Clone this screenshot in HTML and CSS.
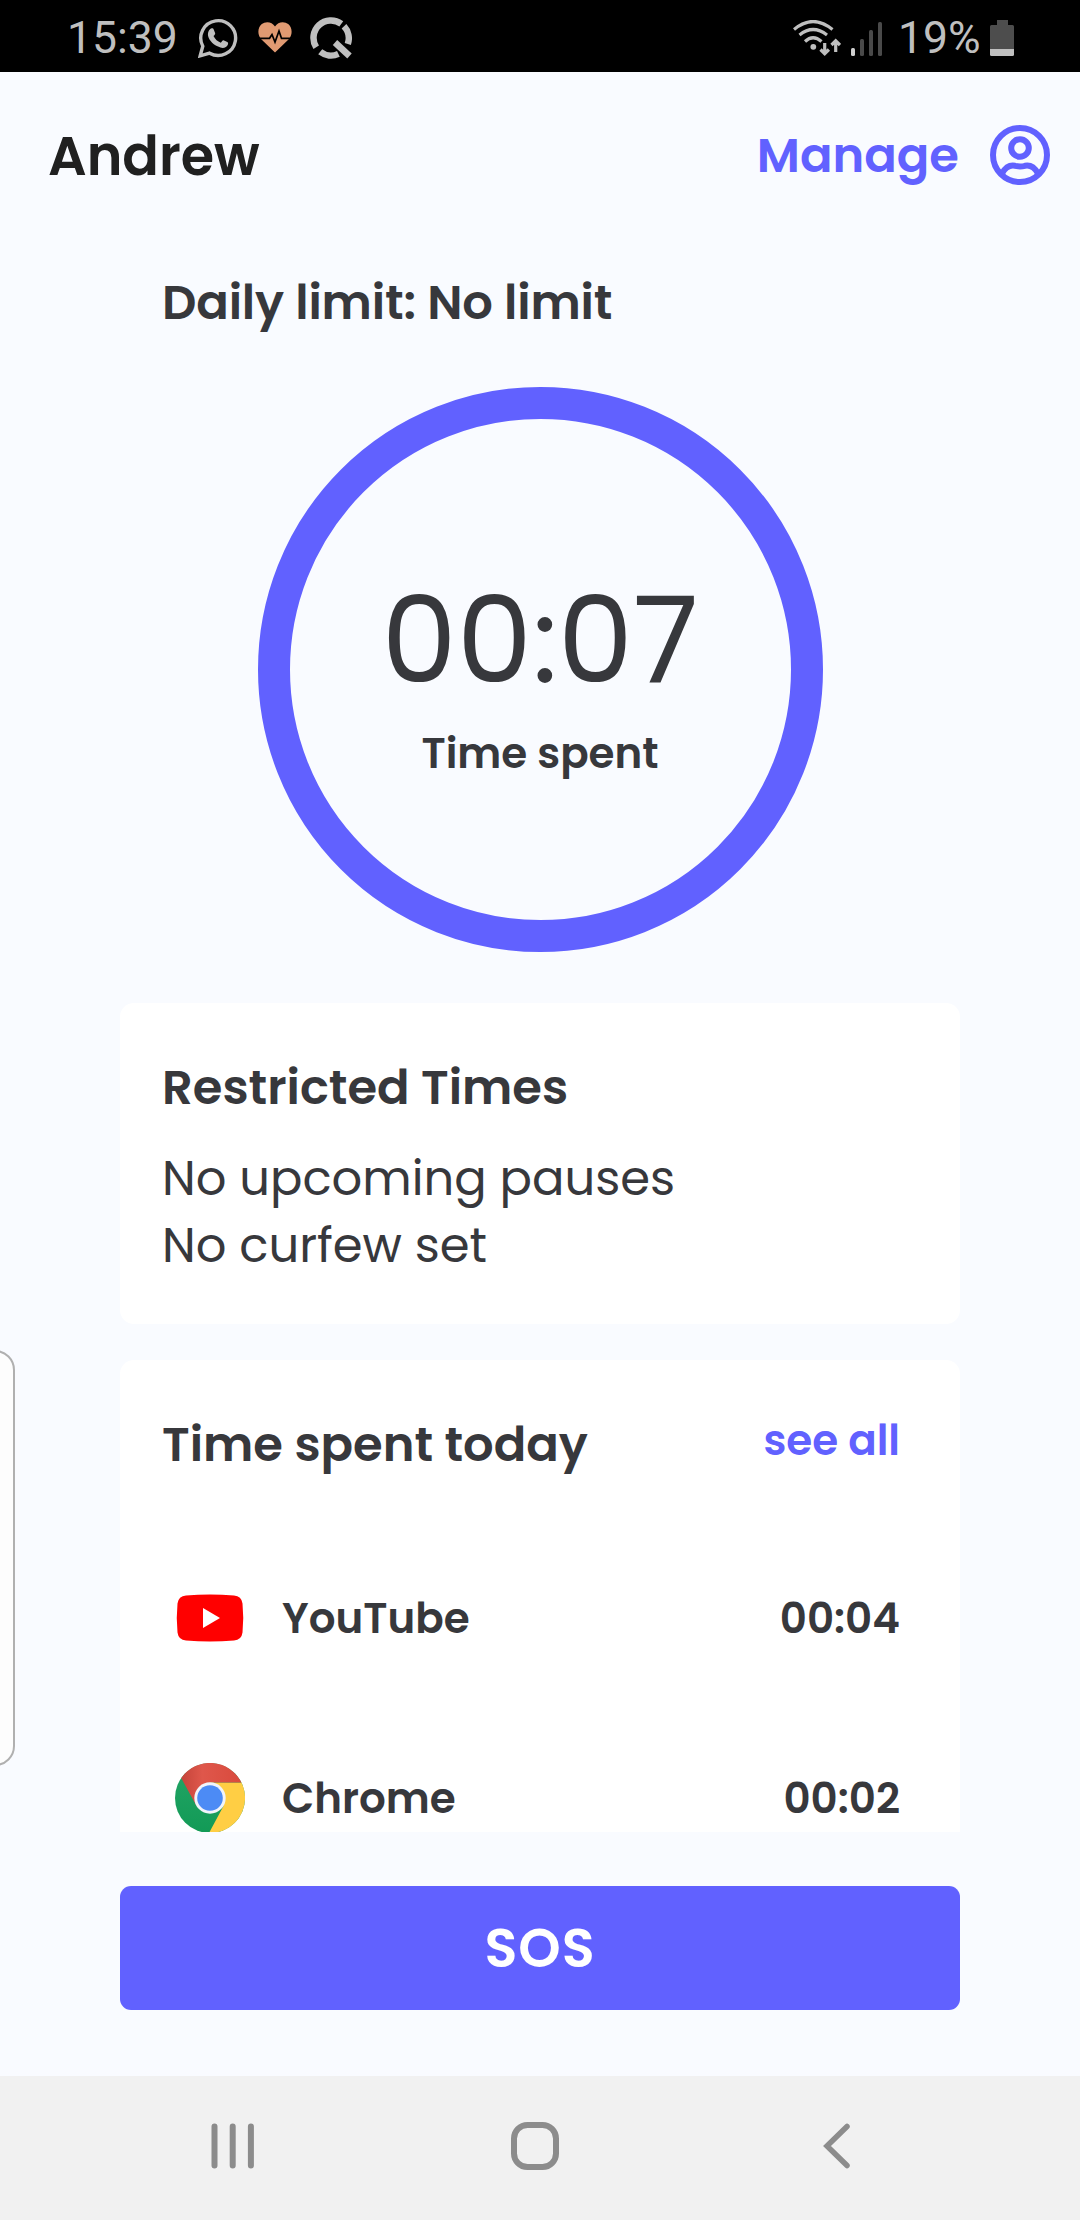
FILE: index.html
```
<!DOCTYPE html>
<html lang="en">
<head>
<meta charset="utf-8">
<title>Andrew – Screen time</title>
<link rel="stylesheet" href="styles.css">
</head>
<body>
<div class="phone">
  <div class="status">
    <div class="status-left">
      <span class="clock">15:39</span>
      <svg class="ic-whatsapp" width="40" height="40" viewBox="0 0 40 40">
        <path d="M2.2 37.8 4.8 28.2A17.4 17.4 0 1 1 11.6 35.2Z" fill="none" stroke="#bfbfbf" stroke-width="3.4"/>
        <path d="M13 10.6c1.500-.6 2.300-.1 2.800 1.100l1.300 3.200c.3.900-.1 1.600-1.600 3.200 1.700 3.400 4.100 5.400 7.300 6.700 1.600-2 2.100-2.800 3.200-2.300l3.300 1.600c1 .5 1 1.300.5 2.700-.9 2.600-4.200 3.700-7.300 2.800-6.900-2-11.300-7-12.400-11.500-.6-3 .7-6.500 2.900-7.500Z" fill="#bfbfbf"/>
      </svg>
      <svg class="ic-heart" width="34" height="31" viewBox="0 0 34 31">
        <path d="M17 30.500 3.500 17.500C-1 12.800-.3 5.500 3.500 2.300 7.700-1.200 14-.3 17 4.500 20-.3 26.300-1.200 30.500 2.300 34.300 5.500 35 12.800 30.500 17.500Z" fill="#e09a72"/>
        <path d="M0 16.300H11.500L14 12.500 17 20 21 9 23.500 16.300H34" fill="none" stroke="#000" stroke-width="1.700"/>
      </svg>
      <svg class="ic-q" width="42" height="42" viewBox="0 0 42 42">
        <g fill="none" stroke="#bfbfbf" stroke-width="6.500">
          <path d="M6.200 30.300A17.500 17.500 0 0 1 31.300 6.800"/>
          <path d="M34 9.300A17.500 17.500 0 0 1 37.800 27"/>
          <path d="M28.400 36.900A17.500 17.500 0 0 1 10.200 34.800"/>
          <path d="M25 25.500 39.500 39"/>
        </g>
      </svg>
    </div>
    <div class="status-right">
      <svg width="48" height="36" viewBox="0 0 48 36">
        <g fill="none" stroke="#bfbfbf" stroke-width="3.200">
          <path d="M1 9.500Q20-6.500 39.500 9.500"/>
          <path d="M6.500 15Q20 4 34 15"/>
          <path d="M12 21.500Q20 14 28.500 21.500"/>
          <path d="M31.700 23V33M27.500 29.500 31.700 33.700 35.900 29.500M42.700 32V21.500M38.500 25 42.700 20.800 46.900 25"/>
        </g>
        <circle cx="20.300" cy="26.800" r="2.900" fill="#bfbfbf"/>
      </svg>
      <svg class="ic-signal" width="32" height="34" viewBox="0 0 32 34">
        <rect x="0" y="26" width="4" height="8" rx="1.500" fill="#cfcfcf"/>
        <g fill="#4a4a4a"><rect x="9" y="17" width="4" height="17" rx="1.500"/><rect x="18" y="8" width="4" height="26" rx="1.500"/><rect x="27" y="0" width="4" height="34" rx="1.500"/></g>
      </svg>
      <span class="percent">19%</span>
      <svg class="ic-battery" width="24" height="36" viewBox="0 0 24 36">
        <path d="M7 0H18V5H22.500Q24 5 24 6.500V29H0V6.500Q0 5 1.500 5H7Z" fill="#4d4d4d"/>
        <path d="M0 29H24V34.500Q24 36 22.500 36H1.500Q0 36 0 34.500Z" fill="#bfbfbf"/>
      </svg>
    </div>
  </div>

  <header class="header">
    <h1 class="name">Andrew</h1>
    <a class="manage">Manage</a>
    <svg width="60" height="60" viewBox="0 0 60 60" fill="none" stroke="#6161ff" stroke-width="6">
      <circle cx="30" cy="30" r="27"/>
      <circle cx="30" cy="23" r="8.800"/>
      <path d="M12 48.500C16 41.500 21 40 25 40.800Q30 42 35 40.800C39 40 44 41.500 48 48.500"/>
    </svg>
  </header>

  <main class="scroll">
    <p class="limit">Daily limit: No limit</p>
    <div class="ring">
      <span class="ring-value">00:07</span>
      <span class="ring-label">Time spent</span>
    </div>
    <section class="card restricted">
      <h2 class="title">Restricted Times</h2>
      <p class="line">No upcoming pauses</p>
      <p class="line">No curfew set</p>
    </section>
    <section class="card">
      <div class="card-head">
        <h2 class="title">Time spent today</h2>
        <a class="see-all">see all</a>
      </div>
      <div class="row">
        <svg class="app-icon" width="70" height="70" viewBox="0 0 70 70">
          <path d="M11 12.500Q35 10.500 59 12.500Q66.500 13 67.500 20.500Q69 35 67.500 49.500Q66.500 57 59 57.500Q35 59.500 11 57.500Q3.500 57 2.500 49.500Q1 35 2.500 20.500Q3.500 13 11 12.500Z" fill="#f00"/>
          <path d="M28 25 45 35 28 45Z" fill="#fff"/>
        </svg>
        <span class="app-name">YouTube</span>
        <span class="app-time">00:04</span>
      </div>
      <div class="row">
        <svg class="app-icon" width="70" height="70" viewBox="0 0 70 70">
          <defs>
            <linearGradient id="red" x1="0" x2="1"><stop offset="0" stop-color="#c5443a"/><stop offset=".35" stop-color="#df574b"/><stop offset="1" stop-color="#d94a3d"/></linearGradient>
            <linearGradient id="green" x1="0" y1="0" x2="0" y2="1"><stop offset="0" stop-color="#23a566"/><stop offset="1" stop-color="#129a56"/></linearGradient>
          </defs>
          <circle cx="35" cy="35" r="35" fill="url(#green)"/>
          <path d="M35 19.500H66.400A35 35 0 0 1 34 70L48.500 43Z" fill="#ffce44"/>
          <path d="M6.200 15A35 35 0 0 1 66.400 19.500H35L21.500 43Z" fill="url(#red)"/>
          <circle cx="35" cy="35" r="15.700" fill="#f1f4fa"/>
          <circle cx="35" cy="35" r="12.800" fill="#4c8bf5"/>
        </svg>
        <span class="app-name">Chrome</span>
        <span class="app-time">00:02</span>
      </div>
    </section>
  </main>

  <footer class="footer"><button class="sos">SOS</button></footer>

  <nav class="nav">
    <svg width="44" height="46" viewBox="0 0 44 46" stroke="#8c8c8c" stroke-width="6" stroke-linecap="round"><path d="M3.500 3.500V42.500M21.700 3.500V42.500M39.900 3.500V42.500"/></svg>
    <svg class="home" width="48" height="48" viewBox="0 0 48 48"><rect x="3" y="3" width="42" height="42" rx="13.500" fill="none" stroke="#8c8c8c" stroke-width="6"/></svg>
    <svg width="28" height="46" viewBox="0 0 28 46" fill="none" stroke="#8c8c8c" stroke-width="5.500" stroke-linecap="round"><path d="M24 3.500 4 23 24 42.500"/></svg>
  </nav>
  <div class="edge-handle"></div>
</div>
</body>
</html>
```
FILE: styles.css
```
* { box-sizing: border-box; margin: 0; padding: 0; }
body { background: #f9fbff; }
svg { display: block; flex: none; }

.phone {
  position: relative;
  width: 1080px;
  height: 2220px;
  display: flex;
  flex-direction: column;
  overflow: hidden;
  background: #f9fbff;
  color: #37383c;
  font-family: Poppins, Inter, sans-serif;
}

.status {
  height: 72px;
  padding: 0 66px 0 67px;
  display: flex;
  justify-content: space-between;
  background: #000;
  color: #bfbfbf;
  font: 400 44.5px/76px Roboto, sans-serif;
}
.status-left, .status-right { display: flex; align-items: center; height: 75px; }
.clock { width: 131px; }
.ic-heart { margin-left: 20px; }
.ic-q { margin-left: 18px; }
.ic-signal { margin: 2px 0 0 10px; }
.percent { width: 92px; margin-left: 15px; }

.header {
  height: 166px;
  padding: 0 30px 0 48px;
  display: flex;
  align-items: center;
  font-weight: 600;
}
.name { flex: 1; padding-top: 2px; font-size: 54px; font-weight: 600; line-height: 80px; color: #202020; }
.manage { margin-right: 31px; padding-top: 1px; font-size: 48px; line-height: 72px; color: #6161ff; }

.scroll {
  height: 1594px;
  padding: 0 120px;
  overflow: hidden;
}
.limit { padding-left: 42px; font-size: 48px; line-height: 130px; font-weight: 600; letter-spacing: -.15px; }
.ring {
  width: 565px;
  height: 565px;
  margin: 19px auto 51px;
  padding-top: 161px;
  border: 32px solid #6161ff;
  border-radius: 50%;
  display: flex;
  flex-direction: column;
  align-items: center;
}
.ring-value { font-size: 120px; line-height: 120px; }
.ring-label { margin-top: 24px; font-size: 42px; line-height: 60px; font-weight: 600; }

.card { background: #fff; border-radius: 14px; }
.restricted { height: 321px; margin-bottom: 36px; padding: 51px 42px 0; }
.restricted .title { margin-bottom: 24px; }
.title { font-size: 48px; line-height: 67px; font-weight: 600; }
.line { font-size: 48px; line-height: 67px; }

.card-head {
  height: 168px;
  padding: 0 60px 0 42px;
  display: flex;
  align-items: center;
  justify-content: space-between;
}
.see-all { font-size: 42px; line-height: 60px; font-weight: 600; color: #6161ff; margin-bottom: 7px; }
.row {
  height: 180px;
  padding: 0 60px 0 55px;
  display: flex;
  align-items: center;
  font-size: 42px;
  font-weight: 600;
}
.app-name { flex: 1; margin-left: 37px; }

.footer { height: 244px; padding: 54px 120px 0; }
.sos {
  display: block;
  width: 840px;
  height: 124px;
  border: 0;
  border-radius: 11px;
  background: #6161ff;
  color: #fff;
  font: 600 54px/124px Poppins, Inter, sans-serif;
  letter-spacing: 1px;
}

.nav {
  height: 144px;
  padding: 0 229px 4px 211px;
  display: flex;
  align-items: center;
  justify-content: space-between;
  background: #f1f1f1;
}
.home { margin-right: 9px; }

.edge-handle {
  position: absolute;
  left: -40px;
  top: 1350px;
  width: 55px;
  height: 416px;
  border: 2px solid #b0b0b0;
  border-radius: 20px;
  background: #fdfdfd;
}
```
